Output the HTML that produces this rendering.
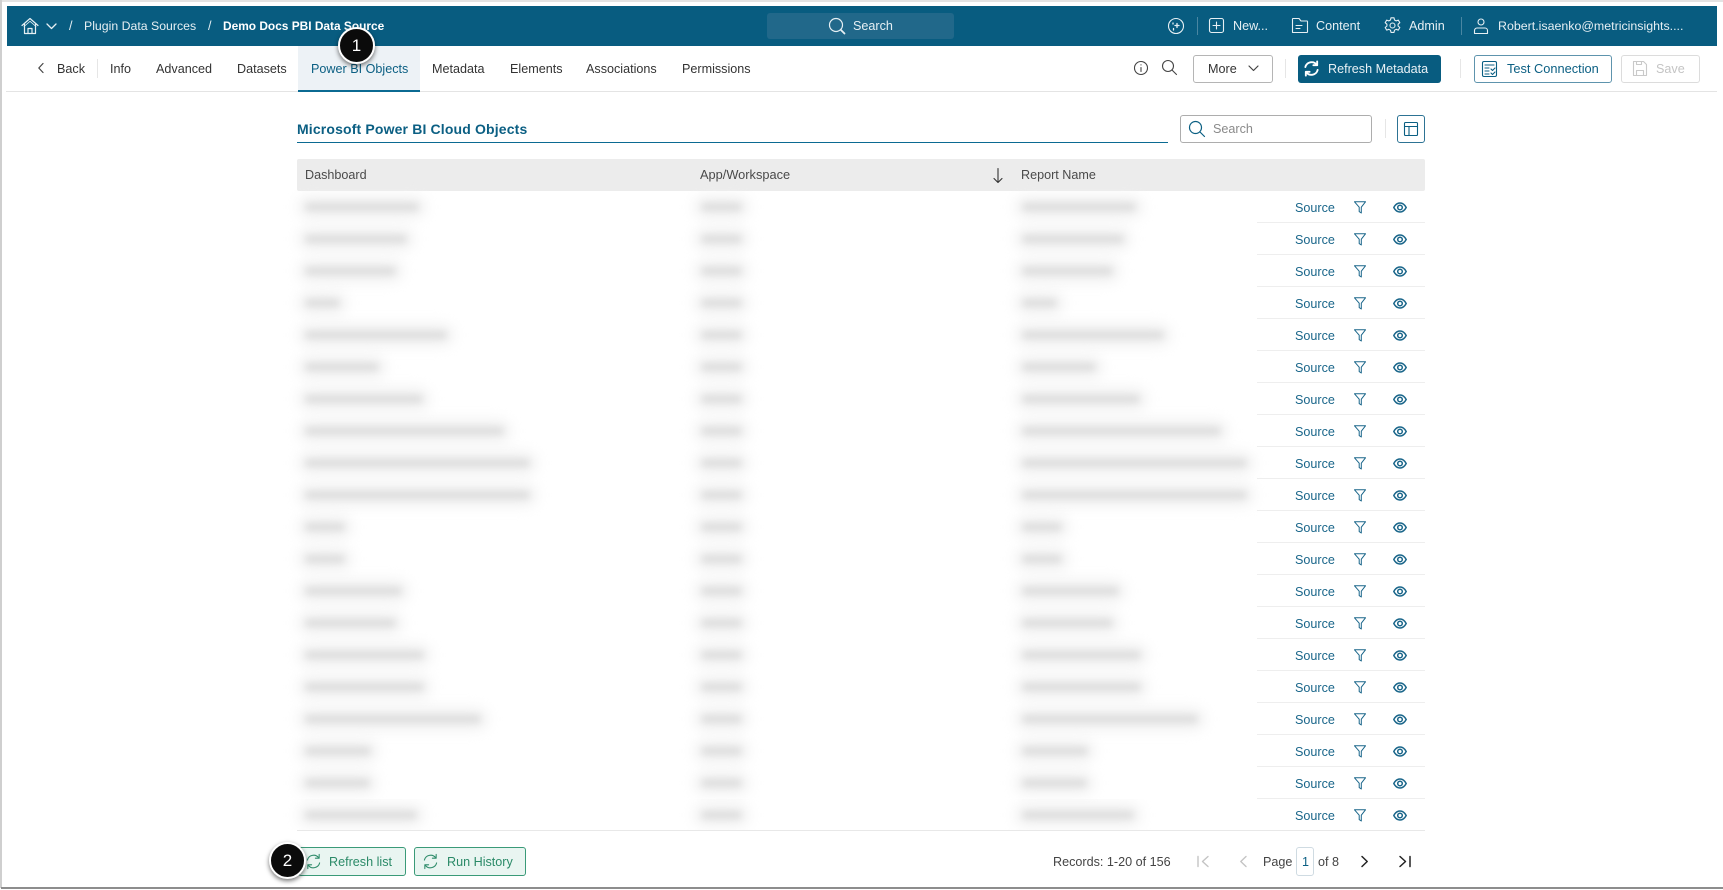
<!DOCTYPE html>
<html><head><meta charset="utf-8"><title>Power BI Objects</title>
<style>
html,body{margin:0;padding:0;background:#fff}
body{width:1723px;height:890px;position:relative;overflow:hidden;font-family:"Liberation Sans",sans-serif;font-size:12.6px;color:#333}
.t{position:absolute;white-space:nowrap;line-height:20px;height:20px}
.w{color:#e6eff3}
.a{position:absolute}
svg{position:absolute;overflow:visible;fill:none;stroke-linecap:round;stroke-linejoin:round}
.d{position:absolute;width:1px;background:#e6e6e6}
.btn{position:absolute;box-sizing:border-box;border-radius:3px;border:1px solid #b5b5b5;background:#fff}
.r{position:absolute;left:0;width:1723px;height:32px}
.r .b{position:absolute;top:12px;height:8px;background:#dcdcdc;filter:blur(4px);border-radius:4px;box-shadow:0 0 12px 7px #f1f1f1}
.r .l{position:absolute;left:1257px;width:168px;top:31px;height:1px;background:#eee}
.r .s{position:absolute;left:1295px;top:7px;line-height:20px;color:#1a668a}
.r svg{stroke:#1a668a}
.r .f{left:1354px;top:10px;width:12px;height:13px;stroke-width:1}
.r .e{left:1393px;top:11px;width:14px;height:11px;stroke-width:1.500}
.badge{position:absolute;box-sizing:border-box;border-radius:50%;background:#0b0b0b;border:2px solid #fff;box-shadow:0 2px 5px rgba(0,0,0,.55);color:#fff;text-align:center;font-size:17px}
</style></head>
<body>
<svg width="0" height="0" style="position:absolute">
<defs>
<symbol id="fi" viewBox="0 0 12 13"><path d="M.5.800h11L7.300 6.200v5.800L5.200 10.600V6.200z"/></symbol>
<symbol id="ey" viewBox="0 0 14 11"><path d="M.8 5.500C2.500 2.300 4.500 1 7 1s4.500 1.300 6.200 4.500C11.500 8.700 9.500 10 7 10S2.500 8.700.8 5.500z"/><circle cx="7" cy="5.500" r="2.300"/></symbol>
<symbol id="rf" viewBox="0 0 18 18"><path d="M2.500 7.500A6.800 6.800 0 0 1 14.500 5M15.500 10.500A6.800 6.800 0 0 1 3.500 13"/><path d="M15 1.500V5.500H11M3 16.500V12.500H7"/></symbol>
</defs>
</svg>

<!-- screenshot frame -->
<div class="a" style="left:0;top:0;width:1723px;height:2px;background:#e3e3e3"></div>
<div class="a" style="left:0;top:0;width:2px;height:888px;background:#cfcfcf"></div>
<div class="a" style="left:1px;top:887px;width:1722px;height:2px;background:#8d8d8d"></div>

<!-- top navigation -->
<div class="a" style="left:7px;top:6px;width:1710px;height:40px;background:#085c80"></div>
<svg style="left:21px;top:17px;width:18px;height:18px;stroke:#e6eff3;stroke-width:1.200"><path d="M1 8.500 9 1.500l8 7M3.500 7v9.500h11V7M7 16.500v-5h4v5"/><path d="M9 4.300 15 9.500M9 4.300 3 9.500" stroke-width=".8"/></svg>
<svg style="left:46px;top:23px;width:11px;height:7px;stroke:#e6eff3;stroke-width:1.300"><path d="M1 1l4.500 4.500L10 1"/></svg>
<span class="t w" style="left:69px;top:16px">/</span>
<span class="t w" style="left:84px;top:16px;font-size:12.3px">Plugin Data Sources</span>
<span class="t w" style="left:208px;top:16px">/</span>
<span class="t" style="left:223px;top:16px;color:#fff;font-weight:bold;font-size:11.9px">Demo Docs PBI Data Source</span>

<div class="a" style="left:767px;top:13px;width:187px;height:26px;background:#21688a;border-radius:3px"></div>
<svg style="left:828px;top:17px;width:18px;height:18px;stroke:#e6eff3;stroke-width:1.200"><circle cx="8" cy="8" r="6.500"/><path d="M12.700 12.700 16.500 16.500" stroke-width="1.800"/></svg>
<span class="t w" style="left:853px;top:16px">Search</span>

<svg style="left:1168px;top:18px;width:16px;height:16px;stroke:#e6eff3;stroke-width:1.100"><circle cx="8" cy="8" r="7.500"/><path d="M9 5.500v4M7 7.500h4M5 5v1M5.500 10.500v1.500" stroke-width="1.300"/></svg>
<div class="a" style="left:1197px;top:17px;width:1px;height:18px;background:#4a86a2"></div>
<svg style="left:1209px;top:18px;width:15px;height:15px;stroke:#e6eff3;stroke-width:1.100"><rect x=".5" y=".5" width="14" height="14" rx="2"/><path d="M7.500 4v7M4 7.500h7"/></svg>
<span class="t w" style="left:1233px;top:16px">New...</span>
<svg style="left:1292px;top:18px;width:16px;height:15px;stroke:#e6eff3;stroke-width:1.100"><path d="M.5 14.500V1a.5.500 0 0 1 .5-.5h6l2 2.500h6a.5.500 0 0 1 .5.500v10.500a.5.500 0 0 1-.5.500z"/><path d="M4 7.500h6M4 10.500h4"/></svg>
<span class="t w" style="left:1316px;top:16px">Content</span>
<svg style="left:1384px;top:17px;width:17px;height:17px;stroke:#e6eff3;stroke-width:1.100"><path d="M7 .8h3l.5 2.200 1.700.9 2.100-.8 1.500 2.600-1.700 1.500v1.800l1.700 1.500-1.500 2.600-2.100-.8-1.700.9-.5 2.200H7l-.5-2.200-1.700-.9-2.100.8-1.500-2.600 1.700-1.500V7.200L1.200 5.700l1.500-2.600 2.100.8 1.700-.9z"/><circle cx="8.500" cy="8.500" r="2.500"/></svg>
<span class="t w" style="left:1409px;top:16px">Admin</span>
<div class="a" style="left:1461px;top:17px;width:1px;height:18px;background:#4a86a2"></div>
<svg style="left:1474px;top:18px;width:14px;height:16px;stroke:#e6eff3;stroke-width:1.100"><circle cx="7" cy="4" r="3"/><path d="M.5 15.500V12.500a2.500 2.500 0 0 1 2.500-2.500h8a2.500 2.500 0 0 1 2.500 2.500v3z"/></svg>
<span class="t w" style="left:1498px;top:16px;font-size:12.4px">Robert.isaenko@metricinsights....</span>

<!-- tab bar -->
<div class="a" style="left:6px;top:91px;width:1711px;height:1px;background:#e4e4e4"></div>
<svg style="left:38px;top:63px;width:6px;height:10px;stroke:#444;stroke-width:1.200"><path d="M5 .5.800 5 5 9.500"/></svg>
<span class="t" style="left:57px;top:59px">Back</span>
<div class="d" style="left:97px;top:59px;height:19px"></div>
<span class="t" style="left:110px;top:59px">Info</span>
<span class="t" style="left:156px;top:59px">Advanced</span>
<span class="t" style="left:237px;top:59px">Datasets</span>
<div class="a" style="left:298px;top:46px;width:122px;height:44px;background:#edf2f6;border-bottom:2px solid #0b6a92"></div>
<span class="t" style="left:311px;top:59px;color:#0b5f83">Power BI Objects</span>
<span class="t" style="left:432px;top:59px">Metadata</span>
<span class="t" style="left:510px;top:59px">Elements</span>
<span class="t" style="left:586px;top:59px">Associations</span>
<span class="t" style="left:682px;top:59px">Permissions</span>

<svg style="left:1134px;top:61px;width:14px;height:14px;stroke:#444;stroke-width:1.100"><circle cx="7" cy="7" r="6.500"/><path d="M7 6.500v4M7 3.800v.2"/></svg>
<svg style="left:1162px;top:60px;width:15px;height:15px;stroke:#444;stroke-width:1.100"><circle cx="6" cy="6" r="5.500"/><path d="M10 10l4.500 4.500"/></svg>
<div class="btn" style="left:1193px;top:55px;width:80px;height:28px"></div>
<span class="t" style="left:1208px;top:59px">More</span>
<svg style="left:1248px;top:65px;width:11px;height:7px;stroke:#444;stroke-width:1.200"><path d="M1 1l4.500 4.500L10 1"/></svg>
<div class="d" style="left:1285px;top:59px;height:19px"></div>
<div class="a" style="left:1298px;top:55px;width:143px;height:28px;background:#085c80;border-radius:3px"></div>
<svg viewBox="0 0 18 18" style="left:1303px;top:60px;width:17px;height:17px;stroke:#fff;stroke-width:2"><path d="M2.500 7.500A6.800 6.800 0 0 1 14.500 5M15.500 10.500A6.800 6.800 0 0 1 3.500 13"/><path d="M15 1.500V5.500H11M3 16.500V12.500H7"/></svg>
<span class="t" style="left:1328px;top:59px;color:#e9f1f5">Refresh Metadata</span>
<div class="d" style="left:1460px;top:59px;height:19px"></div>
<div class="btn" style="left:1474px;top:55px;width:138px;height:28px;border-color:#5e94ad"></div>
<svg style="left:1482px;top:61px;width:15px;height:17px;stroke:#0b5f83;stroke-width:1.100"><rect x=".5" y=".5" width="14" height="15" rx="1.500"/><path d="M3 4h9M3 7h4M3 10h4M3 13h4M9 8l1.500 1.500L13 7M9 12l1.500 1.500L13 11"/></svg>
<span class="t" style="left:1507px;top:59px;color:#0b5f83;font-size:12.8px">Test Connection</span>
<div class="btn" style="left:1621px;top:55px;width:79px;height:28px;border-color:#dcdcdc"></div>
<svg style="left:1633px;top:61px;width:14px;height:15px;stroke:#c9c9c9;stroke-width:1.100"><path d="M.5.500h10l3 3v11H.5zM3.500 14.500v-5h7v5M3.500.500v3h5v-3"/></svg>
<span class="t" style="left:1656px;top:59px;color:#c4c4c4">Save</span>

<!-- title row -->
<span class="t" style="left:297px;top:119px;font-size:14px;font-weight:bold;color:#0b5f83;letter-spacing:.15px">Microsoft Power BI Cloud Objects</span>
<div class="a" style="left:297px;top:142px;width:871px;height:1px;background:#0b6a92"></div>
<div class="btn" style="left:1180px;top:115px;width:192px;height:28px;border-color:#adadad"></div>
<svg style="left:1189px;top:121px;width:16px;height:16px;stroke:#0b5f83;stroke-width:1.200"><circle cx="6.500" cy="6.500" r="6"/><path d="M11 11l4.500 4.500"/></svg>
<span class="t" style="left:1213px;top:119px;color:#8a8a8a">Search</span>
<div class="d" style="left:1385px;top:119px;height:19px"></div>
<div class="btn" style="left:1397px;top:115px;width:28px;height:28px;border-color:#2d7394"></div>
<svg style="left:1404px;top:122px;width:14px;height:14px;stroke:#0b5f83;stroke-width:1.100"><rect x=".5" y=".5" width="13" height="13" rx="1"/><path d="M.5 4.500h13M5 4.500v9"/></svg>

<!-- table header -->
<div class="a" style="left:297px;top:159px;width:1128px;height:32px;background:#ececec;border-radius:2px"></div>
<span class="t" style="left:305px;top:165px;color:#4a4a4a">Dashboard</span>
<span class="t" style="left:700px;top:165px;color:#4a4a4a;font-size:12.8px">App/Workspace</span>
<svg style="left:993px;top:168px;width:10px;height:15px;stroke:#333;stroke-width:1.100"><path d="M5 .5v14M1 10.500l4 4 4-4"/></svg>
<span class="t" style="left:1021px;top:165px;color:#4a4a4a">Report Name</span>

<!-- table rows -->
<div class="r" style="top:191px"><i class="b" style="left:305px;width:114px"></i><i class="b" style="left:701px;width:41px"></i><i class="b" style="left:1022px;width:114px"></i><i class="l"></i><span class="s">Source</span><svg class="f" viewBox="0 0 12 13"><use href="#fi"/></svg><svg class="e" viewBox="0 0 14 11"><use href="#ey"/></svg></div>
<div class="r" style="top:223px"><i class="b" style="left:305px;width:102px"></i><i class="b" style="left:701px;width:41px"></i><i class="b" style="left:1022px;width:102px"></i><i class="l"></i><span class="s">Source</span><svg class="f" viewBox="0 0 12 13"><use href="#fi"/></svg><svg class="e" viewBox="0 0 14 11"><use href="#ey"/></svg></div>
<div class="r" style="top:255px"><i class="b" style="left:305px;width:91px"></i><i class="b" style="left:701px;width:41px"></i><i class="b" style="left:1022px;width:91px"></i><i class="l"></i><span class="s">Source</span><svg class="f" viewBox="0 0 12 13"><use href="#fi"/></svg><svg class="e" viewBox="0 0 14 11"><use href="#ey"/></svg></div>
<div class="r" style="top:287px"><i class="b" style="left:305px;width:35px"></i><i class="b" style="left:701px;width:41px"></i><i class="b" style="left:1022px;width:35px"></i><i class="l"></i><span class="s">Source</span><svg class="f" viewBox="0 0 12 13"><use href="#fi"/></svg><svg class="e" viewBox="0 0 14 11"><use href="#ey"/></svg></div>
<div class="r" style="top:319px"><i class="b" style="left:305px;width:142px"></i><i class="b" style="left:701px;width:41px"></i><i class="b" style="left:1022px;width:142px"></i><i class="l"></i><span class="s">Source</span><svg class="f" viewBox="0 0 12 13"><use href="#fi"/></svg><svg class="e" viewBox="0 0 14 11"><use href="#ey"/></svg></div>
<div class="r" style="top:351px"><i class="b" style="left:305px;width:74px"></i><i class="b" style="left:701px;width:41px"></i><i class="b" style="left:1022px;width:74px"></i><i class="l"></i><span class="s">Source</span><svg class="f" viewBox="0 0 12 13"><use href="#fi"/></svg><svg class="e" viewBox="0 0 14 11"><use href="#ey"/></svg></div>
<div class="r" style="top:383px"><i class="b" style="left:305px;width:118px"></i><i class="b" style="left:701px;width:41px"></i><i class="b" style="left:1022px;width:118px"></i><i class="l"></i><span class="s">Source</span><svg class="f" viewBox="0 0 12 13"><use href="#fi"/></svg><svg class="e" viewBox="0 0 14 11"><use href="#ey"/></svg></div>
<div class="r" style="top:415px"><i class="b" style="left:305px;width:199px"></i><i class="b" style="left:701px;width:41px"></i><i class="b" style="left:1022px;width:199px"></i><i class="l"></i><span class="s">Source</span><svg class="f" viewBox="0 0 12 13"><use href="#fi"/></svg><svg class="e" viewBox="0 0 14 11"><use href="#ey"/></svg></div>
<div class="r" style="top:447px"><i class="b" style="left:305px;width:225px"></i><i class="b" style="left:701px;width:41px"></i><i class="b" style="left:1022px;width:225px"></i><i class="l"></i><span class="s">Source</span><svg class="f" viewBox="0 0 12 13"><use href="#fi"/></svg><svg class="e" viewBox="0 0 14 11"><use href="#ey"/></svg></div>
<div class="r" style="top:479px"><i class="b" style="left:305px;width:225px"></i><i class="b" style="left:701px;width:41px"></i><i class="b" style="left:1022px;width:225px"></i><i class="l"></i><span class="s">Source</span><svg class="f" viewBox="0 0 12 13"><use href="#fi"/></svg><svg class="e" viewBox="0 0 14 11"><use href="#ey"/></svg></div>
<div class="r" style="top:511px"><i class="b" style="left:305px;width:40px"></i><i class="b" style="left:701px;width:41px"></i><i class="b" style="left:1022px;width:40px"></i><i class="l"></i><span class="s">Source</span><svg class="f" viewBox="0 0 12 13"><use href="#fi"/></svg><svg class="e" viewBox="0 0 14 11"><use href="#ey"/></svg></div>
<div class="r" style="top:543px"><i class="b" style="left:305px;width:40px"></i><i class="b" style="left:701px;width:41px"></i><i class="b" style="left:1022px;width:40px"></i><i class="l"></i><span class="s">Source</span><svg class="f" viewBox="0 0 12 13"><use href="#fi"/></svg><svg class="e" viewBox="0 0 14 11"><use href="#ey"/></svg></div>
<div class="r" style="top:575px"><i class="b" style="left:305px;width:97px"></i><i class="b" style="left:701px;width:41px"></i><i class="b" style="left:1022px;width:97px"></i><i class="l"></i><span class="s">Source</span><svg class="f" viewBox="0 0 12 13"><use href="#fi"/></svg><svg class="e" viewBox="0 0 14 11"><use href="#ey"/></svg></div>
<div class="r" style="top:607px"><i class="b" style="left:305px;width:91px"></i><i class="b" style="left:701px;width:41px"></i><i class="b" style="left:1022px;width:91px"></i><i class="l"></i><span class="s">Source</span><svg class="f" viewBox="0 0 12 13"><use href="#fi"/></svg><svg class="e" viewBox="0 0 14 11"><use href="#ey"/></svg></div>
<div class="r" style="top:639px"><i class="b" style="left:305px;width:119px"></i><i class="b" style="left:701px;width:41px"></i><i class="b" style="left:1022px;width:119px"></i><i class="l"></i><span class="s">Source</span><svg class="f" viewBox="0 0 12 13"><use href="#fi"/></svg><svg class="e" viewBox="0 0 14 11"><use href="#ey"/></svg></div>
<div class="r" style="top:671px"><i class="b" style="left:305px;width:119px"></i><i class="b" style="left:701px;width:41px"></i><i class="b" style="left:1022px;width:119px"></i><i class="l"></i><span class="s">Source</span><svg class="f" viewBox="0 0 12 13"><use href="#fi"/></svg><svg class="e" viewBox="0 0 14 11"><use href="#ey"/></svg></div>
<div class="r" style="top:703px"><i class="b" style="left:305px;width:176px"></i><i class="b" style="left:701px;width:41px"></i><i class="b" style="left:1022px;width:176px"></i><i class="l"></i><span class="s">Source</span><svg class="f" viewBox="0 0 12 13"><use href="#fi"/></svg><svg class="e" viewBox="0 0 14 11"><use href="#ey"/></svg></div>
<div class="r" style="top:735px"><i class="b" style="left:305px;width:66px"></i><i class="b" style="left:701px;width:41px"></i><i class="b" style="left:1022px;width:66px"></i><i class="l"></i><span class="s">Source</span><svg class="f" viewBox="0 0 12 13"><use href="#fi"/></svg><svg class="e" viewBox="0 0 14 11"><use href="#ey"/></svg></div>
<div class="r" style="top:767px"><i class="b" style="left:305px;width:65px"></i><i class="b" style="left:701px;width:41px"></i><i class="b" style="left:1022px;width:65px"></i><i class="l"></i><span class="s">Source</span><svg class="f" viewBox="0 0 12 13"><use href="#fi"/></svg><svg class="e" viewBox="0 0 14 11"><use href="#ey"/></svg></div>
<div class="r" style="top:799px;height:31px;overflow:hidden"><i class="b" style="left:305px;width:112px"></i><i class="b" style="left:701px;width:41px"></i><i class="b" style="left:1022px;width:112px"></i><span class="s">Source</span><svg class="f" viewBox="0 0 12 13"><use href="#fi"/></svg><svg class="e" viewBox="0 0 14 11"><use href="#ey"/></svg></div>
<div class="a" style="left:297px;top:830px;width:1128px;height:1px;background:#e8e8e8"></div>

<!-- footer -->
<div class="btn" style="left:298px;top:847px;width:108px;height:29px;background:#e9f5f1;border-color:#3a9a78"></div>
<svg viewBox="0 0 18 18" style="left:305px;top:853px;width:17px;height:17px;stroke:#2b8a68;stroke-width:1.100"><use href="#rf"/></svg>
<span class="t" style="left:329px;top:852px;color:#2b8a68">Refresh list</span>
<div class="btn" style="left:414px;top:847px;width:112px;height:29px;background:#e9f5f1;border-color:#3a9a78"></div>
<svg viewBox="0 0 18 18" style="left:422px;top:853px;width:17px;height:17px;stroke:#2b8a68;stroke-width:1.100"><use href="#rf"/></svg>
<span class="t" style="left:447px;top:852px;color:#2b8a68">Run History</span>

<span class="t" style="left:1053px;top:852px;color:#444">Records: 1-20 of 156</span>
<svg style="left:1197px;top:856px;width:12px;height:11px;stroke:#c4c4c4;stroke-width:1.400"><path d="M1 .5v10M11 .5 5.500 5.500 11 10.500"/></svg>
<svg style="left:1240px;top:856px;width:7px;height:11px;stroke:#c4c4c4;stroke-width:1.400"><path d="M6 .5.800 5.500 6 10.500"/></svg>
<span class="t" style="left:1263px;top:852px;color:#444">Page</span>
<div class="btn" style="left:1296px;top:847px;width:18px;height:29px;border-color:#cfdbe2"></div>
<span class="t" style="left:1302px;top:852px;color:#0b5f83">1</span>
<span class="t" style="left:1318px;top:852px;color:#444">of 8</span>
<svg style="left:1361px;top:856px;width:7px;height:11px;stroke:#222;stroke-width:1.500"><path d="M1 .5 6.200 5.500 1 10.500"/></svg>
<svg style="left:1399px;top:856px;width:12px;height:11px;stroke:#222;stroke-width:1.500"><path d="M1 .5 6.500 5.500 1 10.500M11 .5v10"/></svg>

<!-- callout badges -->
<div class="badge" style="left:338px;top:27px;width:37px;height:37px;line-height:33px">1</div>
<div class="badge" style="left:269px;top:842px;width:37px;height:37px;line-height:33px">2</div>
</body></html>
